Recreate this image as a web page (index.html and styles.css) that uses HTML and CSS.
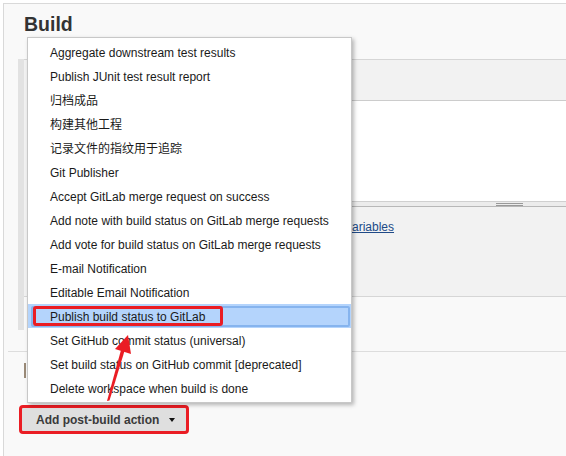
FILE: index.html
```html
<!DOCTYPE html>
<html>
<head>
<meta charset="utf-8">
<link rel="stylesheet" href="styles.css">
</head>
<body>
<div class="page">
  <h1 class="title">Build</h1>
  <div class="section">
    <div class="panel">
      <div class="panel-head"></div>
      <div class="textarea">
        <div class="textarea-body"></div>
        <div class="grip"><span class="grip-lines"></span></div>
      </div>
      <p class="help"><a href="#" class="link">variables</a></p>
    </div>
  </div>
  <div class="divider"></div>
  <div class="mark"></div>
  <div class="btn-row">
    <div class="btn">Add post-build action <span class="caret"></span></div>
  </div>
</div>

<ul class="menu">
  <li class="item">Aggregate downstream test results</li>
  <li class="item">Publish JUnit test result report</li>
  <li class="item cjk">归档成品</li>
  <li class="item cjk">构建其他工程</li>
  <li class="item cjk">记录文件的指纹用于追踪</li>
  <li class="item">Git Publisher</li>
  <li class="item">Accept GitLab merge request on success</li>
  <li class="item">Add note with build status on GitLab merge requests</li>
  <li class="item">Add vote for build status on GitLab merge requests</li>
  <li class="item">E-mail Notification</li>
  <li class="item">Editable Email Notification</li>
  <li class="item active">Publish build status to GitLab</li>
  <li class="item">Set GitHub commit status (universal)</li>
  <li class="item">Set build status on GitHub commit [deprecated]</li>
  <li class="item">Delete workspace when build is done</li>
</ul>

<div class="annot annot-item"></div>

<svg class="arrow" width="566" height="456" viewBox="0 0 566 456">
  <polygon points="107,401 109.5,400.5 124.5,351 121,350" fill="#ea1d24"/>
  <polygon points="128,335 131,354 115,349" fill="#ea1d24"/>
</svg>
</body>
</html>
```

FILE: styles.css
```css
html, body {
  margin: 0;
  padding: 0;
}
body {
  position: relative;
  width: 566px;
  height: 456px;
  overflow: hidden;
  background: #ffffff;
  font-family: "Liberation Sans", Arial, sans-serif;
  font-size: 12px;
  color: #1a1a1a;
}
.page {
  margin: 3px 0 0 3px;
  border-top: 1px solid #d9d9d9;
  border-left: 1px solid #d9d9d9;
  background: #f9f9f9;
  height: 452px;
  display: flex;
  flex-direction: column;
}
.title {
  margin: 8px 0 0 20px;
  font-size: 19.5px;
  line-height: 24px;
  font-weight: bold;
  color: #333333;
}
.section {
  margin: 23px 0 0 14px;
  border-left: 6px solid #e2e2e2;
  height: 271px;
}
.panel {
  background: #f2f2f2;
  border-top: 1px solid #d6d6d6;
  border-bottom: 1px solid #d6d6d6;
  height: 236px;
  display: flex;
  flex-direction: column;
}
.panel-head {
  height: 40px;
}
.textarea {
  margin-left: 8px;
  border-top: 1px solid #cccccc;
  background: #ffffff;
  display: flex;
  flex-direction: column;
}
.textarea-body {
  height: 100px;
}
.grip {
  height: 4px;
  border-top: 1px solid #d0d0d0;
  border-bottom: 1px solid #b8b8b8;
  background: #ececec;
  display: flex;
  justify-content: flex-end;
  padding-right: 43px;
}
.grip-lines {
  width: 27px;
  height: 1px;
  margin-top: 1px;
  border-top: 1px solid #999999;
  border-bottom: 1px solid #999999;
}
.help {
  margin: 12px 0 0 328px;
  overflow: hidden;
  white-space: nowrap;
  line-height: 16px;
  font-size: 12px;
  color: #333333;
}
.link {
  margin-left: -6px;
  color: #204a87;
  text-decoration: underline;
}
.divider {
  margin: 21px 0 0 4px;
  border-top: 1px solid #dddddd;
}
.mark {
  margin: 11px 0 0 20px;
  width: 2px;
  height: 15px;
  background: #9a8a78;
}
.btn-row {
  margin: 27px 0 0 15px;
  display: flex;
}
.btn {
  width: 150px;
  height: 22px;
  padding: 1px 0 0 14px;
  border: 3px solid #ea1d24;
  border-radius: 4px;
  background: #dfdfdf;
  font-weight: bold;
  font-size: 12px;
  line-height: 22px;
  color: #3a3a3a;
  display: flex;
  align-items: center;
}
.caret {
  margin-left: 10px;
  width: 0;
  height: 0;
  border-left: 3px solid transparent;
  border-right: 3px solid transparent;
  border-top: 4px solid #111111;
}
.menu {
  position: absolute;
  left: 27px;
  top: 37px;
  width: 323px;
  margin: 0;
  padding: 2px 0;
  list-style: none;
  background: #ffffff;
  border: 1px solid #c8c8c8;
  box-shadow: 2px 2px 4px rgba(0, 0, 0, 0.28);
}
.item {
  position: relative;
  height: 23px;
  padding-top: 1px;
  line-height: 24px;
  padding-left: 22px;
  white-space: nowrap;
  color: #1a1a1a;
}
.cjk {
  font-family: "Liberation Sans", "Noto Sans CJK SC", sans-serif;
}
.active {
  background: #b4d4fc;
}
.active::after {
  content: "";
  position: absolute;
  left: 3px;
  right: 1px;
  top: 2px;
  bottom: 1px;
  border: 2px solid #86b4ee;
  border-radius: 2px;
}
.annot {
  position: absolute;
  border: 3px solid #ea1d24;
  border-radius: 3px;
}
.annot-item {
  left: 33px;
  top: 306px;
  width: 184px;
  height: 14px;
}
.arrow {
  position: absolute;
  left: 0;
  top: 0;
  pointer-events: none;
}
```
